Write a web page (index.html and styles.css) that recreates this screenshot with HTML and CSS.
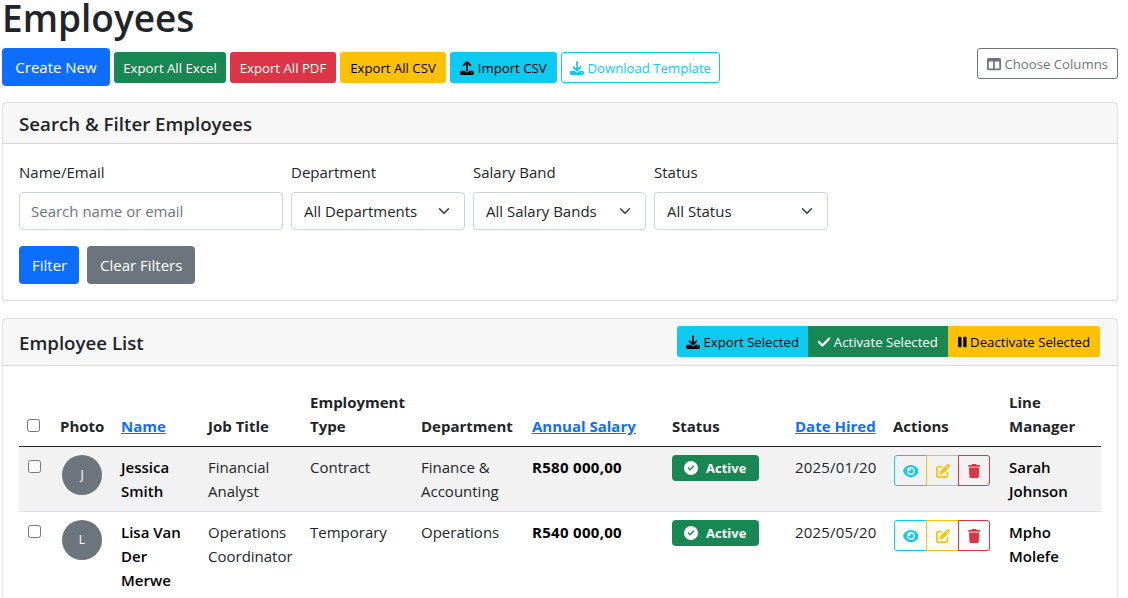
FILE: index.html
```html
<!DOCTYPE html>
<html lang="en">
<head>
    <meta charset="UTF-8">
    <title>Employees</title>
    <link rel="stylesheet" href="styles.css">
</head>
<body>
    <svg class="sprite" xmlns="http://www.w3.org/2000/svg">
        <symbol id="i-download" viewBox="0 0 512 512"><path d="M288 32c0-17.7-14.3-32-32-32s-32 14.3-32 32V274.7l-73.4-73.4c-12.5-12.5-32.8-12.5-45.3 0s-12.5 32.8 0 45.3l128 128c12.5 12.5 32.8 12.5 45.3 0l128-128c12.5-12.5 12.5-32.8 0-45.3s-32.8-12.5-45.3 0L288 274.7V32zM64 352c-35.3 0-64 28.7-64 64v32c0 35.3 28.7 64 64 64H448c35.3 0 64-28.7 64-64V416c0-35.3-28.7-64-64-64H346.5l-45.3 45.3c-25 25-65.5 25-90.5 0L165.5 352H64zm368 56a24 24 0 1 1 0 48 24 24 0 1 1 0-48z"/></symbol>
        <symbol id="i-upload" viewBox="0 0 512 512"><path d="M288 109.3V352c0 17.7-14.3 32-32 32s-32-14.3-32-32V109.3l-73.4 73.4c-12.5 12.5-32.8 12.5-45.3 0s-12.5-32.8 0-45.3l128-128c12.5-12.5 32.8-12.5 45.3 0l128 128c12.5 12.5 12.5 32.8 0 45.3s-32.8 12.5-45.3 0L288 109.3zM64 352H192c0 35.3 28.7 64 64 64s64-28.7 64-64H448c35.3 0 64 28.7 64 64v32c0 35.3-28.7 64-64 64H64c-35.3 0-64-28.7-64-64V416c0-35.3 28.7-64 64-64zM432 456a24 24 0 1 0 0-48 24 24 0 1 0 0 48z"/></symbol>
        <symbol id="i-columns" viewBox="0 0 512 512"><path d="M0 96C0 60.7 28.7 32 64 32H448c35.3 0 64 28.7 64 64V416c0 35.3-28.7 64-64 64H64c-35.3 0-64-28.7-64-64V96zm64 64V416H224V160H64zm384 0H288V416H448V160z"/></symbol>
        <symbol id="i-check" viewBox="0 0 448 512"><path stroke="currentColor" stroke-width="28" d="M438.6 105.4c12.5 12.5 12.5 32.8 0 45.3l-256 256c-12.5 12.5-32.8 12.5-45.3 0l-128-128c-12.5-12.5-12.5-32.8 0-45.3s32.8-12.5 45.3 0L160 338.7 393.4 105.4c12.5-12.5 32.8-12.5 45.3 0z"/></symbol>
        <symbol id="i-pause" viewBox="0 0 320 512"><path d="M48 64C21.5 64 0 85.5 0 112V400c0 26.5 21.5 48 48 48H80c26.5 0 48-21.5 48-48V112c0-26.5-21.5-48-48-48H48zm192 0c-26.5 0-48 21.5-48 48V400c0 26.5 21.5 48 48 48h32c26.5 0 48-21.5 48-48V112c0-26.5-21.5-48-48-48H240z"/></symbol>
        <symbol id="i-check-circle" viewBox="0 0 512 512"><path d="M256 512A256 256 0 1 0 256 0a256 256 0 1 0 0 512zM369 209L241 337c-9.4 9.4-24.6 9.4-33.9 0l-64-64c-9.4-9.4-9.4-24.6 0-33.9s24.6-9.4 33.9 0l47 47L335 175c9.4-9.4 24.6-9.4 33.9 0s9.4 24.6 0 33.9z"/></symbol>
        <symbol id="i-eye" viewBox="0 0 576 512"><path d="M288 32c-80.8 0-145.5 36.8-192.6 80.6C48.6 156 17.3 208 2.5 243.7c-3.3 7.9-3.3 16.7 0 24.6C17.3 304 48.6 356 95.4 399.4C142.5 443.2 207.2 480 288 480s145.5-36.8 192.6-80.6c46.8-43.5 78.1-95.4 93-131.1c3.3-7.9 3.3-16.7 0-24.6c-14.9-35.7-46.2-87.7-93-131.1C433.5 68.8 368.8 32 288 32zM144 256a144 144 0 1 1 288 0 144 144 0 1 1 -288 0zm144-64c0 35.3-28.7 64-64 64c-7.1 0-13.9-1.2-20.3-3.3c-5.5-1.8-11.9 1.6-11.7 7.4c.3 6.9 1.3 13.8 3.2 20.7c13.7 51.2 66.4 81.6 117.6 67.9s81.6-66.4 67.9-117.6c-11.1-41.5-47.8-69.4-88.6-71.1c-5.8-.2-9.2 6.1-7.4 11.7c2.1 6.4 3.3 13.2 3.3 20.3z"/></symbol>
        <symbol id="i-edit" viewBox="0 0 512 512"><path d="M471.6 21.7c-21.9-21.9-57.3-21.9-79.2 0L362.3 51.7l97.9 97.9 30.1-30.1c21.9-21.9 21.9-57.3 0-79.2L471.6 21.7zm-299.2 220c-6.1 6.1-10.8 13.6-13.5 21.9l-29.6 88.8c-2.9 8.6-.6 18.1 5.8 24.6s15.9 8.7 24.6 5.8l88.8-29.6c8.2-2.7 15.7-7.4 21.9-13.5L437.7 172.3 339.7 74.3 172.4 241.7zM96 64C43 64 0 107 0 160V416c0 53 43 96 96 96H352c53 0 96-43 96-96V320c0-17.7-14.3-32-32-32s-32 14.3-32 32v96c0 17.7-14.3 32-32 32H96c-17.7 0-32-14.3-32-32V160c0-17.7 14.3-32 32-32h96c17.7 0 32-14.3 32-32s-14.3-32-32-32H96z"/></symbol>
        <symbol id="i-trash" viewBox="0 0 448 512"><path d="M135.2 17.7L128 32H32C14.3 32 0 46.3 0 64S14.3 96 32 96H416c17.7 0 32-14.3 32-32s-14.3-32-32-32H320l-7.2-14.3C307.4 6.8 296.3 0 284.2 0H163.8c-12.1 0-23.2 6.8-28.6 17.7zM416 128H32L53.2 467c1.6 25.3 22.6 45 47.9 45H346.9c25.3 0 46.3-19.7 47.9-45L416 128z"/></symbol>
    </svg>

    <h1>Employees</h1>

    <div class="toolbar">
        <div class="toolbar-left">
            <a class="btn btn-primary btn-create">Create New</a>
            <a class="btn btn-sm btn-success w-excel">Export All Excel</a>
            <a class="btn btn-sm btn-danger w-pdf">Export All PDF</a>
            <a class="btn btn-sm btn-warning w-csv">Export All CSV</a>
            <a class="btn btn-sm btn-info w-import"><svg class="icon"><use href="#i-upload"/></svg> Import CSV</a>
            <a class="btn btn-sm btn-outline-info w-template"><svg class="icon"><use href="#i-download"/></svg> Download Template</a>
        </div>
        <a class="btn btn-sm btn-outline-secondary w-columns"><svg class="icon"><use href="#i-columns"/></svg> Choose Columns</a>
    </div>

    <section class="card card-filter">
        <header class="card-header"><h5>Search &amp; Filter Employees</h5></header>
        <div class="card-body">
            <form class="filter-row">
                <div class="field f-name">
                    <label>Name/Email</label>
                    <input type="text" placeholder="Search name or email">
                </div>
                <div class="field f-dept">
                    <label>Department</label>
                    <select><option>All Departments</option></select>
                </div>
                <div class="field f-band">
                    <label>Salary Band</label>
                    <select><option>All Salary Bands</option></select>
                </div>
                <div class="field f-status">
                    <label>Status</label>
                    <select><option>All Status</option></select>
                </div>
            </form>
            <div class="filter-actions">
                <a class="btn btn-primary btn-filter">Filter</a>
                <a class="btn btn-secondary btn-clear">Clear Filters</a>
            </div>
        </div>
    </section>

    <section class="card">
        <header class="card-header list-header">
            <h5>Employee List</h5>
            <div class="btn-group">
                <a class="btn btn-sm btn-info w-sel-export"><svg class="icon"><use href="#i-download"/></svg> Export Selected</a>
                <a class="btn btn-sm btn-success w-sel-activate"><svg class="icon icon-448"><use href="#i-check"/></svg> Activate Selected</a>
                <a class="btn btn-sm btn-warning w-sel-deactivate"><svg class="icon icon-320"><use href="#i-pause"/></svg> Deactivate Selected</a>
            </div>
        </header>
        <div class="card-body">
            <table>
                <colgroup>
                    <col class="c-check"><col class="c-photo"><col class="c-name"><col class="c-job"><col class="c-type"><col class="c-dept"><col class="c-salary"><col class="c-status"><col class="c-date"><col class="c-actions"><col class="c-manager">
                </colgroup>
                <thead>
                    <tr>
                        <th class="cell-check"><input type="checkbox"></th>
                        <th>Photo</th>
                        <th><a href="#">Name</a></th>
                        <th>Job Title</th>
                        <th>Employment Type</th>
                        <th>Department</th>
                        <th><a href="#">Annual Salary</a></th>
                        <th>Status</th>
                        <th><a href="#">Date Hired</a></th>
                        <th>Actions</th>
                        <th>Line Manager</th>
                    </tr>
                </thead>
                <tbody>
                    <tr class="striped">
                        <td class="cell-check"><input type="checkbox"></td>
                        <td><span class="avatar">J</span></td>
                        <td class="medium">Jessica Smith</td>
                        <td>Financial Analyst</td>
                        <td>Contract</td>
                        <td>Finance &amp; Accounting</td>
                        <td class="salary">R580 000,00</td>
                        <td><span class="badge"><svg class="icon"><use href="#i-check-circle"/></svg> Active</span></td>
                        <td class="date">2025/01/20</td>
                        <td>
                            <div class="actions">
                                <a class="act act-view"><svg class="icon icon-576"><use href="#i-eye"/></svg></a>
                                <a class="act act-edit"><svg class="icon"><use href="#i-edit"/></svg></a>
                                <a class="act act-del"><svg class="icon icon-448"><use href="#i-trash"/></svg></a>
                            </div>
                        </td>
                        <td class="medium">Sarah Johnson</td>
                    </tr>
                    <tr>
                        <td class="cell-check"><input type="checkbox"></td>
                        <td><span class="avatar">L</span></td>
                        <td class="medium">Lisa Van Der Merwe</td>
                        <td>Operations Coordinator</td>
                        <td>Temporary</td>
                        <td>Operations</td>
                        <td class="salary">R540 000,00</td>
                        <td><span class="badge"><svg class="icon"><use href="#i-check-circle"/></svg> Active</span></td>
                        <td class="date">2025/05/20</td>
                        <td>
                            <div class="actions">
                                <a class="act act-view"><svg class="icon icon-576"><use href="#i-eye"/></svg></a>
                                <a class="act act-edit"><svg class="icon"><use href="#i-edit"/></svg></a>
                                <a class="act act-del"><svg class="icon icon-448"><use href="#i-trash"/></svg></a>
                            </div>
                        </td>
                        <td class="medium">Mpho Molefe</td>
                    </tr>
                </tbody>
            </table>
        </div>
    </section>
</body>
</html>
```

FILE: styles.css
```css
html, body { height: 598px; overflow: hidden; }
body { margin: 0; padding: 0 10px 0 2px; font-family: "Open Sans", sans-serif; font-size: 15px; line-height: 24px; color: #212529; background: #fff; }

.sprite { display: none; }
.icon { width: 14px; height: 14px; fill: currentColor; vertical-align: -2px; }
.icon-320 { width: 8.75px; }
.icon-448 { width: 12.25px; }
.icon-576 { width: 15.75px; }

h1 { margin: 0 0 12px; font-size: 37px; line-height: 36px; font-weight: 600; }
h5 { margin: 0 0 -1px; padding-top: 1px; font-size: 18.7px; line-height: 24px; font-weight: 600; }

.toolbar { display: flex; justify-content: space-between; align-items: flex-start; margin-bottom: 16px; }
.toolbar-left { display: flex; align-items: center; gap: 4px; }

.btn { display: inline-block; box-sizing: border-box; height: 38px; padding: 6px 12px; border: 1px solid transparent; border-radius: 4px; font-size: 15px; line-height: 24px; text-align: center; white-space: nowrap; }
.btn-sm { height: 31px; padding: 5px 0 3px; border-radius: 3px; font-size: 13.2px; line-height: 21px; }
.btn-primary { background: #0d6efd; color: #fff; }
.btn-secondary { background: #6c757d; color: #fff; }
.btn-success { background: #198754; color: #fff; }
.btn-danger { background: #dc3545; color: #fff; }
.btn-warning { background: #ffc107; color: #000; }
.btn-info { background: #0dcaf0; color: #000; }
.btn-outline-info { border-color: #0dcaf0; color: #0dcaf0; }
.btn-outline-secondary { border-color: #6c757d; color: #6c757d; }

.btn-create { width: 108px; }
.w-excel { width: 112px; }
.w-pdf { width: 106px; }
.w-csv { width: 106px; }
.w-import { width: 107px; }
.w-template { width: 159px; }
.w-columns { width: 141px; }
.btn-filter { width: 60px; }
.btn-clear { width: 108px; }
.w-sel-export { width: 131px; }
.w-sel-activate { width: 140px; }
.w-sel-deactivate { width: 152px; }

.card { border: 1px solid rgba(0, 0, 0, .125); border-radius: 4px; margin-bottom: 17px; }
.card-header { padding: 8px 16px; background: rgba(0, 0, 0, .03); border-bottom: 1px solid rgba(0, 0, 0, .125); }
.card-body { padding: 16px; }

.filter-row { display: flex; gap: 8px; margin-bottom: 16px; }
.field label { display: block; margin-bottom: 8px; }
.f-name { width: 264px; }
.f-dept { width: 174px; }
.f-band { width: 173px; }
.f-status { width: 174px; }

input[type="text"], select { display: block; box-sizing: border-box; width: 100%; height: 38px; padding: 6px 12px; border: 1px solid #ced4da; border-radius: 4px; background-color: #fff; color: #212529; font: inherit; }
input[type="text"] { padding-left: 11px; }
input[type="text"]::placeholder { color: #6c757d; opacity: 1; }
select { appearance: none; padding-right: 36px; background-image: url("data:image/svg+xml,%3csvg xmlns='http://www.w3.org/2000/svg' viewBox='0 0 16 16'%3e%3cpath fill='none' stroke='%23343a40' stroke-linecap='round' stroke-linejoin='round' stroke-width='2' d='M2 5l6 6 6-6'/%3e%3c/svg%3e"); background-repeat: no-repeat; background-position: right 12px center; background-size: 16px 12px; }

.filter-actions { display: flex; gap: 8px; }

.list-header { display: flex; justify-content: space-between; align-items: center; padding-right: 17px; padding-top: 7px; padding-bottom: 8px; }
.btn-group { display: flex; }
.btn-group .btn { border-radius: 0; }
.btn-group .btn:first-child { border-radius: 3px 0 0 3px; }
.btn-group .btn:last-child { border-radius: 0 3px 3px 0; }

table { width: 1082px; table-layout: fixed; border-collapse: collapse; }
.c-check { width: 33px; }
.c-photo { width: 61px; }
.c-name { width: 87px; }
.c-job { width: 102px; }
.c-type { width: 111px; }
.c-dept { width: 111px; }
.c-salary { width: 140px; }
.c-status { width: 123px; }
.c-date { width: 98px; }
.c-actions { width: 116px; }
.c-manager { width: 100px; }

th, td { padding: 8px; text-align: left; vertical-align: top; }
th { vertical-align: bottom; font-weight: 700; border-bottom: 1px solid #212529; }
th a { color: #0d6efd; }
td { border-bottom: 1px solid #dee2e6; }
.striped td { background: #f2f2f2; }
.medium { font-weight: 600; color: #000; }
.salary { font-weight: 700; color: #000; letter-spacing: .3px; }
.date { letter-spacing: .2px; }
th.cell-check { padding-bottom: 14px; }
th.cell-check input { display: block; margin: 0; }
td.cell-check input { display: block; margin: 5px 0 0 1px; }

.avatar { display: flex; align-items: center; justify-content: center; width: 40px; height: 40px; margin-left: 2px; border-radius: 50%; background: #6c757d; color: #fff; font-size: 12px; }

.badge { display: inline-flex; align-items: center; gap: 8px; box-sizing: border-box; width: 87px; height: 26px; padding-left: 12px; border-radius: 4px; background: #198754; color: #fff; font-size: 13px; font-weight: 700; }

.actions { display: flex; margin-left: 1px; }
.act { display: flex; align-items: center; justify-content: center; box-sizing: border-box; width: 33px; height: 31px; border: 1px solid; margin-left: -1px; }
.act-view { color: #0dcaf0; border-radius: 3px 0 0 3px; margin-left: 0; }
.act-edit { color: #ffc107; }
.act-del { width: 32px; color: #dc3545; border-radius: 0 3px 3px 0; }
```
